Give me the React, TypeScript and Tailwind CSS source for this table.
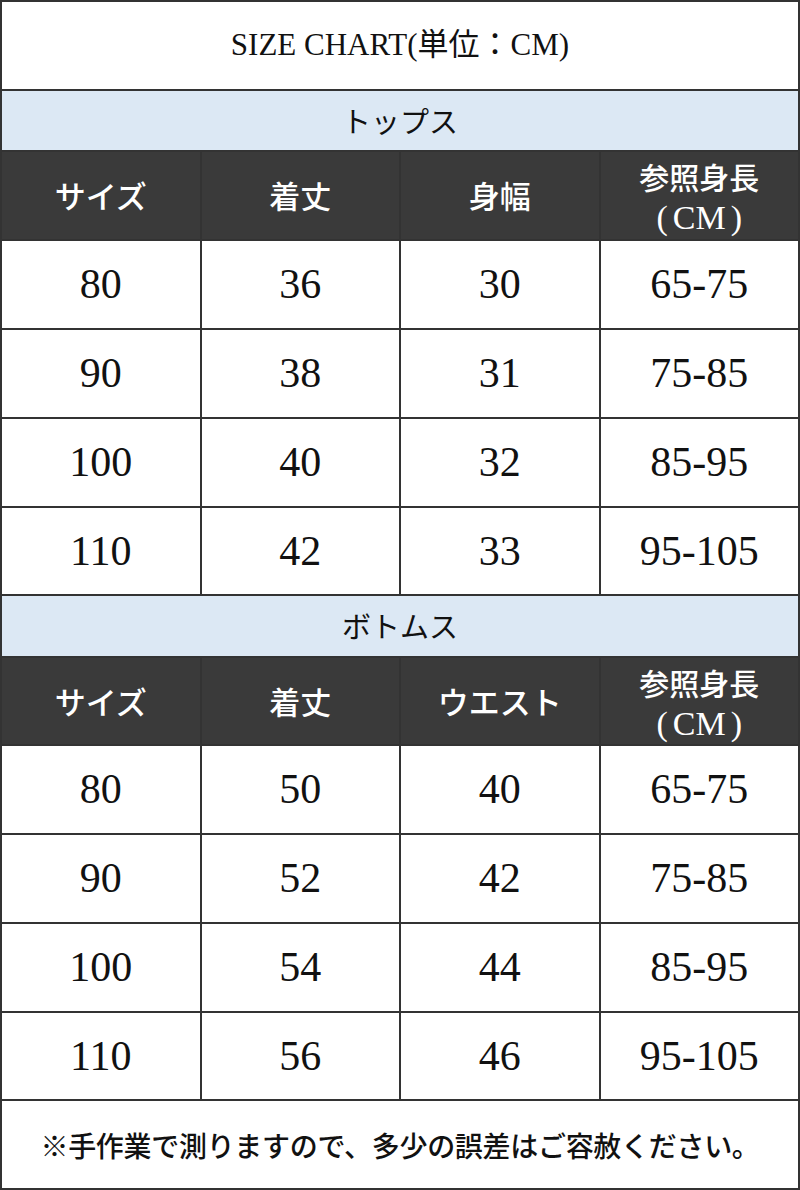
const serif = "font-['Liberation_Serif','Noto_Sans_CJK_JP',serif]"
const sans = "font-['Noto_Sans_CJK_JP','Noto_Sans',sans-serif]"

const tops = [
  ['80', '36', '30', '65-75'],
  ['90', '38', '31', '75-85'],
  ['100', '40', '32', '85-95'],
  ['110', '42', '33', '95-105'],
]

const bottoms = [
  ['80', '50', '40', '65-75'],
  ['90', '52', '42', '75-85'],
  ['100', '54', '44', '85-95'],
  ['110', '56', '46', '95-105'],
]

function Label({ text, h }: { text: string; h: string }) {
  return (
    <div className={`${h} bg-[#dce8f4] flex items-center justify-center text-[29px] text-[#111] ${sans}`}>
      {text}
    </div>
  )
}

function HeaderRow({ third, h }: { third: string; h: string }) {
  const cell = `bg-[#3a3a3a] flex items-center justify-center text-white text-[31px] font-medium ${sans}`
  return (
    <div className={`${h} grid grid-cols-4 gap-[2px]`}>
      <div className={cell}>サイズ</div>
      <div className={cell}>着丈</div>
      <div className={cell}>{third}</div>
      <div className={`${cell} flex-col`}>
        <span className="text-[30px] leading-[44px]">参照身長</span>
        <span className={`${serif} font-normal text-[34px] leading-[39px] flex`}>
          <span className="mr-[5px]">(</span>
          <span>CM</span>
          <span className="ml-[5px]">)</span>
        </span>
      </div>
    </div>
  )
}

function DataRows({ rows, heights }: { rows: string[][]; heights: string[] }) {
  return (
    <>
      {rows.map((r, i) => (
        <div key={i} className={`${heights[i]} grid grid-cols-4 gap-[2px]`}>
          {r.map((v, j) => (
            <div key={j} className={`bg-white flex items-center justify-center text-[42px] text-[#111] ${serif}`}>
              {v}
            </div>
          ))}
        </div>
      ))}
    </>
  )
}

export default function App() {
  return (
    <div className="w-[800px] h-[1190px] bg-[#333] p-[2px] flex flex-col gap-[2px]">
      <div className={`h-[87px] bg-white flex items-center justify-center text-[31px] text-[#111] ${serif}`}>
        SIZE CHART(単位：CM)
      </div>
      <Label text="トップス" h="h-[59px]" />
      <HeaderRow third="身幅" h="h-[87px]" />
      <DataRows rows={tops} heights={['h-[87px]', 'h-[87px]', 'h-[87px]', 'h-[86px]']} />
      <Label text="ボトムス" h="h-[60px]" />
      <HeaderRow third="ウエスト" h="h-[86px]" />
      <DataRows rows={bottoms} heights={['h-[87px]', 'h-[87px]', 'h-[87px]', 'h-[86px]']} />
      <div className={`h-[87px] bg-white flex items-center justify-center text-[28px] font-medium text-[#111] tracking-[-0.3px] ${sans}`}>
        ※手作業で測りますので、多少の誤差はご容赦ください。
      </div>
    </div>
  )
}
